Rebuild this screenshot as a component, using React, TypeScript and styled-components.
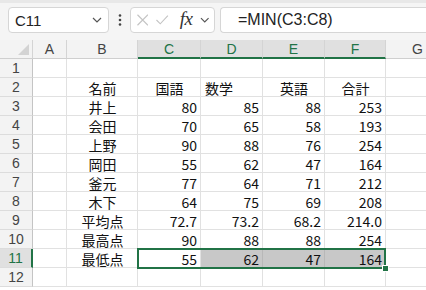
import React from 'react'
import styled, { createGlobalStyle } from 'styled-components'

const GREEN = '#217346'
const GRID = '#e1e1e1'
const FONT = '"Noto Sans CJK JP", "Noto Sans", sans-serif'
const UI_FONT = '"Liberation Sans", Arial, sans-serif'

const GlobalStyle = createGlobalStyle`
  html, body {
    margin: 0;
    padding: 0;
    background: #ffffff;
    overflow: hidden;
  }
  * {
    box-sizing: border-box;
  }
`

const Page = styled.div`
  width: 426px;
  height: 290px;
  overflow: hidden;
  display: flex;
  flex-direction: column;
  background: #ffffff;
`

const Toolbar = styled.div`
  height: 40px;
  flex: none;
  background: #f5f5f5;
  border-top: 3px solid #e8e8e8;
  display: flex;
  align-items: flex-start;
  padding: 4px 0 0 8px;
`

const Box = styled.div`
  height: 26px;
  background: #ffffff;
  border: 1px solid #d6d6d6;
  border-radius: 4px;
  display: flex;
  align-items: center;
`

const NameBox = styled(Box)`
  width: 101px;
  padding: 0 6px 0 6px;
  justify-content: space-between;
  font-family: ${UI_FONT};
  font-size: 15px;
  color: #222;
`

const DotsWrap = styled.div`
  width: 21px;
  height: 26px;
  display: flex;
  align-items: center;
  justify-content: center;
`

const FxBox = styled(Box)`
  width: 85px;
  padding: 0 4px 0 6px;
  gap: 8px;
`

const FxText = styled.span`
  font-family: 'Liberation Serif', 'Times New Roman', serif;
  font-style: italic;
  font-size: 19px;
  color: #333;
  margin-left: 3px;
  margin-top: -2px;
  letter-spacing: -0.5px;
`

const FormulaBox = styled(Box)`
  margin-left: 5px;
  flex: 1;
  border-right: none;
  border-top-right-radius: 0;
  border-bottom-right-radius: 0;
  padding-left: 17px;
  font-family: ${UI_FONT};
  font-size: 16px;
  color: #222;
`

const Sheet = styled.div`
  position: relative;
  flex: 1;
  display: grid;
  grid-template-columns: 33px 34px 71px 63px 62px 62px 61px 64px;
  grid-auto-rows: 19px;
  align-content: start;
`

const HeadCell = styled.div<{ $active?: boolean }>`
  background: ${(p) => (p.$active ? '#e0e0e0' : '#f3f3f3')};
  border-right: 1px solid #d4d4d4;
  border-bottom: ${(p) => (p.$active ? `2px solid ${GREEN}` : '1px solid #cfcfcf')};
  color: ${(p) => (p.$active ? GREEN : '#444')};
  font-family: ${UI_FONT};
  font-size: 14px;
  display: flex;
  align-items: center;
  justify-content: center;
  overflow: hidden;
`

const Corner = styled(HeadCell)`
  justify-content: flex-end;
  align-items: flex-end;
  padding: 0 3px 3px 0;
`

const RowHead = styled.div<{ $active?: boolean }>`
  background: ${(p) => (p.$active ? '#e0e0e0' : '#f3f3f3')};
  border-right: ${(p) => (p.$active ? `2px solid ${GREEN}` : '1px solid #c4c4c4')};
  border-bottom: 1px solid #dcdcdc;
  color: ${(p) => (p.$active ? GREEN : '#444')};
  font-family: ${UI_FONT};
  font-size: 14px;
  display: flex;
  align-items: center;
  justify-content: center;
`

const Cell = styled.div<{ $align: 'left' | 'center' | 'right'; $fill?: boolean }>`
  background: ${(p) => (p.$fill ? '#c8c8c8' : '#ffffff')};
  border-right: 1px solid ${(p) => (p.$fill ? '#b8b8b8' : GRID)};
  border-bottom: 1px solid ${GRID};
  font-family: ${FONT};
  font-size: 14px;
  color: #111;
  display: flex;
  align-items: center;
  padding: 1px 3px 0 4px;
  white-space: nowrap;
  overflow: hidden;
  justify-content: ${(p) =>
    p.$align === 'left' ? 'flex-start' : p.$align === 'right' ? 'flex-end' : 'center'};
`

const Selection = styled.div`
  position: absolute;
  left: 137px;
  top: 208px;
  width: 249px;
  height: 21px;
  border: 2px solid ${GREEN};
  pointer-events: none;
`

const FillHandle = styled.div`
  position: absolute;
  left: 382px;
  top: 225px;
  width: 7px;
  height: 7px;
  background: ${GREEN};
  border: 1px solid #ffffff;
`

const Chevron = () => (
  <svg width="10" height="6" viewBox="0 0 10 6">
    <path d="M1 1 L5 5 L9 1" fill="none" stroke="#555" strokeWidth="1.2" />
  </svg>
)

const Dots = () => (
  <svg width="4" height="12" viewBox="0 0 4 12">
    <circle cx="2" cy="1.5" r="1.3" fill="#444" />
    <circle cx="2" cy="6" r="1.3" fill="#444" />
    <circle cx="2" cy="10.5" r="1.3" fill="#444" />
  </svg>
)

const Cross = () => (
  <svg width="12" height="12" viewBox="0 0 12 12">
    <path d="M0.5 0.5 L11.5 11.5 M11.5 0.5 L0.5 11.5" stroke="#c4c4c4" strokeWidth="1.2" />
  </svg>
)

const Check = () => (
  <svg width="13" height="10" viewBox="0 0 13 10">
    <path d="M0.5 5 L4.5 9 L12.5 0.5" fill="none" stroke="#c4c4c4" strokeWidth="1.2" />
  </svg>
)

const CornerMark = () => (
  <svg width="11" height="11" viewBox="0 0 11 11">
    <path d="M11 0 L11 11 L0 11 Z" fill="#d3d3d3" />
  </svg>
)

type Row = [string, string, string, string, string]

const rows: Row[] = [
  ['', '', '', '', ''],
  ['名前', '国語', '数学', '英語', '合計'],
  ['井上', '80', '85', '88', '253'],
  ['会田', '70', '65', '58', '193'],
  ['上野', '90', '88', '76', '254'],
  ['岡田', '55', '62', '47', '164'],
  ['釜元', '77', '64', '71', '212'],
  ['木下', '64', '75', '69', '208'],
  ['平均点', '72.7', '73.2', '68.2', '214.0'],
  ['最高点', '90', '88', '88', '254'],
  ['最低点', '55', '62', '47', '164'],
  ['', '', '', '', '']
]

const columns = ['A', 'B', 'C', 'D', 'E', 'F', 'G']
const selectedCols = ['C', 'D', 'E', 'F']

const alignFor = (rowIdx: number, colIdx: number): 'left' | 'center' | 'right' => {
  if (colIdx === 0) return 'center'
  if (rowIdx === 1) return colIdx === 2 ? 'left' : 'center'
  return 'right'
}

const App: React.FC = () => {
  return (
    <Page>
      <GlobalStyle />
      <Toolbar>
        <NameBox>
          <span>C11</span>
          <Chevron />
        </NameBox>
        <DotsWrap>
          <Dots />
        </DotsWrap>
        <FxBox>
          <Cross />
          <Check />
          <FxText>fx</FxText>
          <Chevron />
        </FxBox>
        <FormulaBox>=MIN(C3:C8)</FormulaBox>
      </Toolbar>
      <Sheet>
        <Corner>
          <CornerMark />
        </Corner>
        {columns.map((c) => (
          <HeadCell key={c} $active={selectedCols.includes(c)}>
            {c}
          </HeadCell>
        ))}
        {rows.map((row, rowIdx) => {
          const rowNo = rowIdx + 1
          const activeRow = rowNo === 11
          return (
            <React.Fragment key={rowNo}>
              <RowHead $active={activeRow}>{rowNo}</RowHead>
              <Cell $align="left" />
              {row.map((value, colIdx) => (
                <Cell
                  key={colIdx}
                  $align={alignFor(rowIdx, colIdx)}
                  $fill={activeRow && colIdx >= 2}
                >
                  {value}
                </Cell>
              ))}
              <Cell $align="left" />
            </React.Fragment>
          )
        })}
        <Selection />
        <FillHandle />
      </Sheet>
    </Page>
  )
}

export default App
